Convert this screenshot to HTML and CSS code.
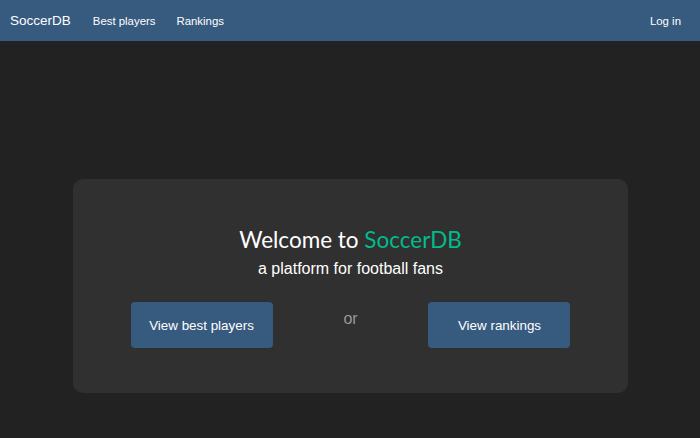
FILE: index.html
```html
<!DOCTYPE html>
<html lang="en">
<head>
<meta charset="utf-8">
<title>SoccerDB</title>
<link rel="stylesheet" href="styles.css">
</head>
<body>
<nav class="navbar">
  <a class="brand" href="#">SoccerDB</a>
  <ul class="nav-links">
    <li><a href="#">Best players</a></li>
    <li><a href="#">Rankings</a></li>
  </ul>
  <a class="login" href="#">Log in</a>
</nav>
<main class="main">
  <section class="card">
    <h1 class="title">Welcome to <span class="accent">SoccerDB</span></h1>
    <p class="subtitle">a platform for football fans</p>
    <div class="actions">
      <a class="btn" href="#">View best players</a>
      <span class="or">or</span>
      <a class="btn" href="#">View rankings</a>
    </div>
  </section>
</main>
</body>
</html>
```

FILE: styles.css
```css
html, body {
  margin: 0;
  padding: 0;
}
body {
  background: #222222;
  color: #ffffff;
  font-family: "Liberation Sans", Arial, sans-serif;
  height: 438px;
  overflow: hidden;
}
a {
  color: #ffffff;
  text-decoration: none;
}
.navbar {
  height: 41px;
  background: #375a7f;
  display: flex;
  align-items: center;
  padding: 0 19px 0 10px;
  box-sizing: border-box;
}
.brand {
  font-size: 13.5px;
  margin-right: 22px;
}
.nav-links {
  list-style: none;
  margin: 0;
  padding: 0;
  display: flex;
  gap: 21px;
  font-size: 11.4px;
  flex: 1;
}
.login {
  font-size: 11.4px;
}
.main {
  padding-top: 138px;
  display: flex;
  justify-content: center;
}
.card {
  width: 555px;
  height: 214px;
  box-sizing: border-box;
  background: #303030;
  border-radius: 10px;
  padding: 47px 57px 0 58px;
  text-align: center;
}
.title {
  font-family: Lato, "Liberation Sans", sans-serif;
  font-weight: 400;
  font-size: 22.5px;
  line-height: 28px;
  margin: 0;
}
.accent {
  color: #00bc8c;
}
.subtitle {
  font-size: 16px;
  line-height: 20px;
  margin: 5px 0 0;
}
.actions {
  margin-top: 23px;
  display: flex;
  justify-content: space-between;
  align-items: flex-start;
}
.btn {
  width: 142px;
  height: 46px;
  box-sizing: border-box;
  background: #375a7f;
  border-radius: 4px;
  display: flex;
  align-items: center;
  justify-content: center;
  font-size: 13.4px;
}
.or {
  color: #999999;
  font-size: 16px;
  line-height: 20px;
  padding-top: 7px;
}
```
